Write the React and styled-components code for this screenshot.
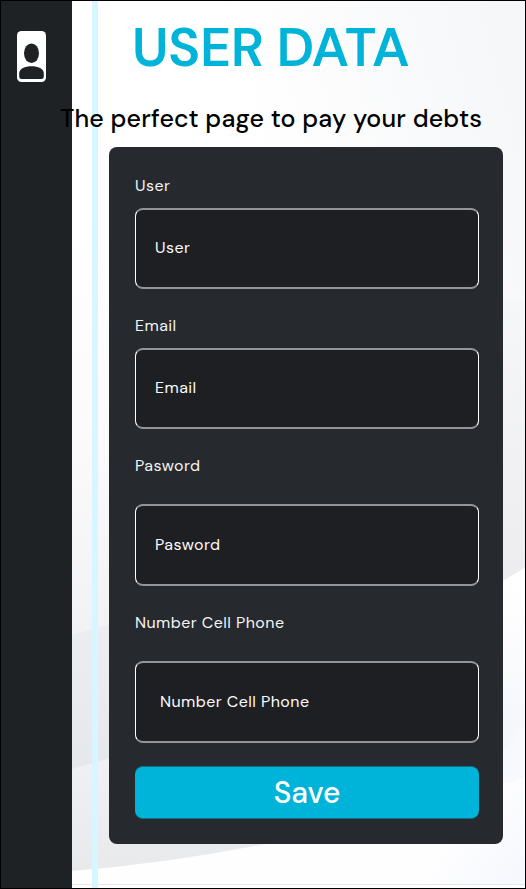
import React from 'react';
import styled, { createGlobalStyle } from 'styled-components';

const GlobalStyle = createGlobalStyle`
  *, *::before, *::after { box-sizing: border-box; }
  body { margin: 0; }
`;

const Page = styled.div`
  position: relative;
  display: flex;
  width: 526px;
  height: 889px;
  overflow: hidden;
  border: 1px solid #000;
  background: #fff;
  font-family: 'DM Sans', 'Inter', sans-serif;
`;

const Backdrop = styled.svg`
  position: absolute;
  inset: 0;
  width: 524px;
  height: 887px;
`;

const Sidebar = styled.aside`
  position: relative;
  flex: 0 0 71px;
  padding: 30px 0 0 16px;
  background: #1e2225;
`;

const ProfileIcon = styled.svg`
  display: block;
  width: 29px;
  height: 51px;
`;

const Rail = styled.div`
  position: relative;
  flex: 0 0 6px;
  margin-left: 20px;
  background: #d6f7ff;
`;

const Main = styled.main`
  position: relative;
  display: flex;
  flex-direction: column;
  flex: 0 0 405px;
  padding-left: 11px;
`;

const Title = styled.h1`
  height: 64px;
  margin: 15px 0 0 23px;
  font-size: 54px;
  font-weight: 650;
  line-height: 64px;
  letter-spacing: -0.4px;
  white-space: nowrap;
  color: #00b4d9;
`;

const Subtitle = styled.p`
  height: 32px;
  margin: 23px 0 0 -49px;
  font-size: 25px;
  font-weight: 500;
  line-height: 32px;
  letter-spacing: 0.17px;
  white-space: nowrap;
  color: #000;
`;

const Card = styled.form`
  display: flex;
  flex-direction: column;
  gap: 27px;
  height: 697px;
  margin-top: 12px;
  padding: 29px 24px 0 26px;
  border-radius: 8px;
  background: #26292d;
`;

const Field = styled.label`
  display: flex;
  flex-direction: column;
  gap: ${(p) => p.$gap}px;
  color: #f4f4f5;
  font-size: 16px;
  font-weight: 370;
  line-height: 20px;
  letter-spacing: 0.44px;
`;

const Caption = styled.span`
  height: 20px;
`;

const Input = styled.input`
  width: 100%;
  height: ${(p) => p.$height}px;
  padding: 0 0 ${(p) => p.$lift}px ${(p) => p.$indent}px;
  border: solid #949599;
  border-width: 2px 1px;
  border-left-color: #fff;
  border-right-color: #fff;
  border-radius: 8px;
  outline: none;
  background: #1e1f23;
  font: inherit;
  letter-spacing: inherit;

  &::placeholder {
    color: #fbfbfb;
    opacity: 1;
  }
`;

const SaveButton = styled.button`
  height: 53px;
  margin-top: -4px;
  padding: 0 0 1px;
  border: solid #0e7287;
  border-width: 1px 0;
  border-radius: 8px;
  background: #00b4d9;
  color: #fff;
  font-family: inherit;
  font-size: 30px;
  font-weight: 500;
`;

const fields = [
  { label: 'User', gap: 12, height: 81, indent: 19, lift: 2 },
  { label: 'Email', gap: 12, height: 81, indent: 19, lift: 2 },
  { label: 'Pasword', gap: 28, height: 82, indent: 19, lift: 1, type: 'password' },
  { label: 'Number Cell Phone', gap: 28, height: 82, indent: 24, lift: 1, type: 'tel' },
];

function Waves() {
  return (
    <Backdrop viewBox="1 1 524 887" aria-hidden="true">
      <defs>
        <linearGradient id="topRight" x1="0.4" y1="0.5" x2="1" y2="0.4">
          <stop offset="0" stopColor="#fff" />
          <stop offset="1" stopColor="#f6f7f9" />
        </linearGradient>
        <linearGradient id="leftFade" x1="0" y1="0" x2="0" y2="1">
          <stop offset="0" stopColor="#fff" />
          <stop offset="0.5" stopColor="#fbfbfb" />
          <stop offset="1" stopColor="#f1f2f4" />
        </linearGradient>
        <linearGradient id="leftBand" x1="0" y1="0" x2="0" y2="1">
          <stop offset="0" stopColor="#ecedf0" />
          <stop offset="1" stopColor="#e5e8ea" />
        </linearGradient>
        <linearGradient id="lowerBand" x1="0" y1="0" x2="0" y2="1">
          <stop offset="0" stopColor="#f0f1f4" />
          <stop offset="1" stopColor="#e6e8ea" />
        </linearGradient>
        <linearGradient id="rightFade" x1="0" y1="0" x2="0" y2="1">
          <stop offset="0" stopColor="#f6f7f9" />
          <stop offset="1" stopColor="#ececee" />
        </linearGradient>
        <linearGradient id="rightGlow" x1="0" y1="0" x2="0" y2="1">
          <stop offset="0.1" stopColor="#fff" />
          <stop offset="1" stopColor="#f4f6fb" />
        </linearGradient>
        <linearGradient id="corner" gradientUnits="userSpaceOnUse" x1="460" y1="830" x2="525" y2="884">
          <stop offset="0" stopColor="#fefeff" />
          <stop offset="1" stopColor="#f5f7fd" />
        </linearGradient>
      </defs>
      <path d="M72 1H525V300H72Z" fill="url(#topRight)" />
      <path d="M72 220H300V640H72Z" fill="url(#leftFade)" />
      <path d="M300 300H525V600H300Z" fill="url(#rightFade)" />
      <path d="M72 635L110 624H300V780H72Z" fill="url(#leftBand)" />
      <path d="M72 769L110 758H300V889H72Z" fill="url(#lowerBand)" />
      <path d="M72 871Q170 863 265 844L503 581L525 568V889H72Z" fill="#fefeff" />
      <path d="M503 581L525 568V725L503 752H400V650Z" fill="url(#rightGlow)" />
      <path d="M503 752L525 725V778L503 784Z" fill="#f8f9fd" />
      <path d="M300 844H503V784L525 778V884H300Z" fill="url(#corner)" />
      <path d="M72 884.5H525" stroke="#e6e6ed" />
    </Backdrop>
  );
}

export default function App() {
  return (
    <Page>
      <GlobalStyle />
      <Waves />
      <Sidebar>
        <ProfileIcon viewBox="0 0 29 51" role="img" aria-label="Profile">
          <rect width="29" height="51" rx="4.5" fill="#fff" />
          <ellipse cx="14.5" cy="22.2" rx="7.5" ry="9.8" fill="#1e2225" />
          <path
            d="M2.2 45V42.5C2.2 37.5 8 35.2 14.5 35.2S26.8 37.5 26.8 42.5V45Q26.8 48 24.5 48H4.5Q2.2 48 2.2 45Z"
            fill="#1e2225"
          />
        </ProfileIcon>
      </Sidebar>
      <Rail />
      <Main>
        <Title>USER DATA</Title>
        <Subtitle>The perfect page to pay your debts</Subtitle>
        <Card>
          {fields.map((f) => (
            <Field key={f.label} $gap={f.gap}>
              <Caption>{f.label}</Caption>
              <Input
                type={f.type || 'text'}
                placeholder={f.label}
                $height={f.height}
                $indent={f.indent}
                $lift={f.lift}
              />
            </Field>
          ))}
          <SaveButton type="button">Save</SaveButton>
        </Card>
      </Main>
    </Page>
  );
}
